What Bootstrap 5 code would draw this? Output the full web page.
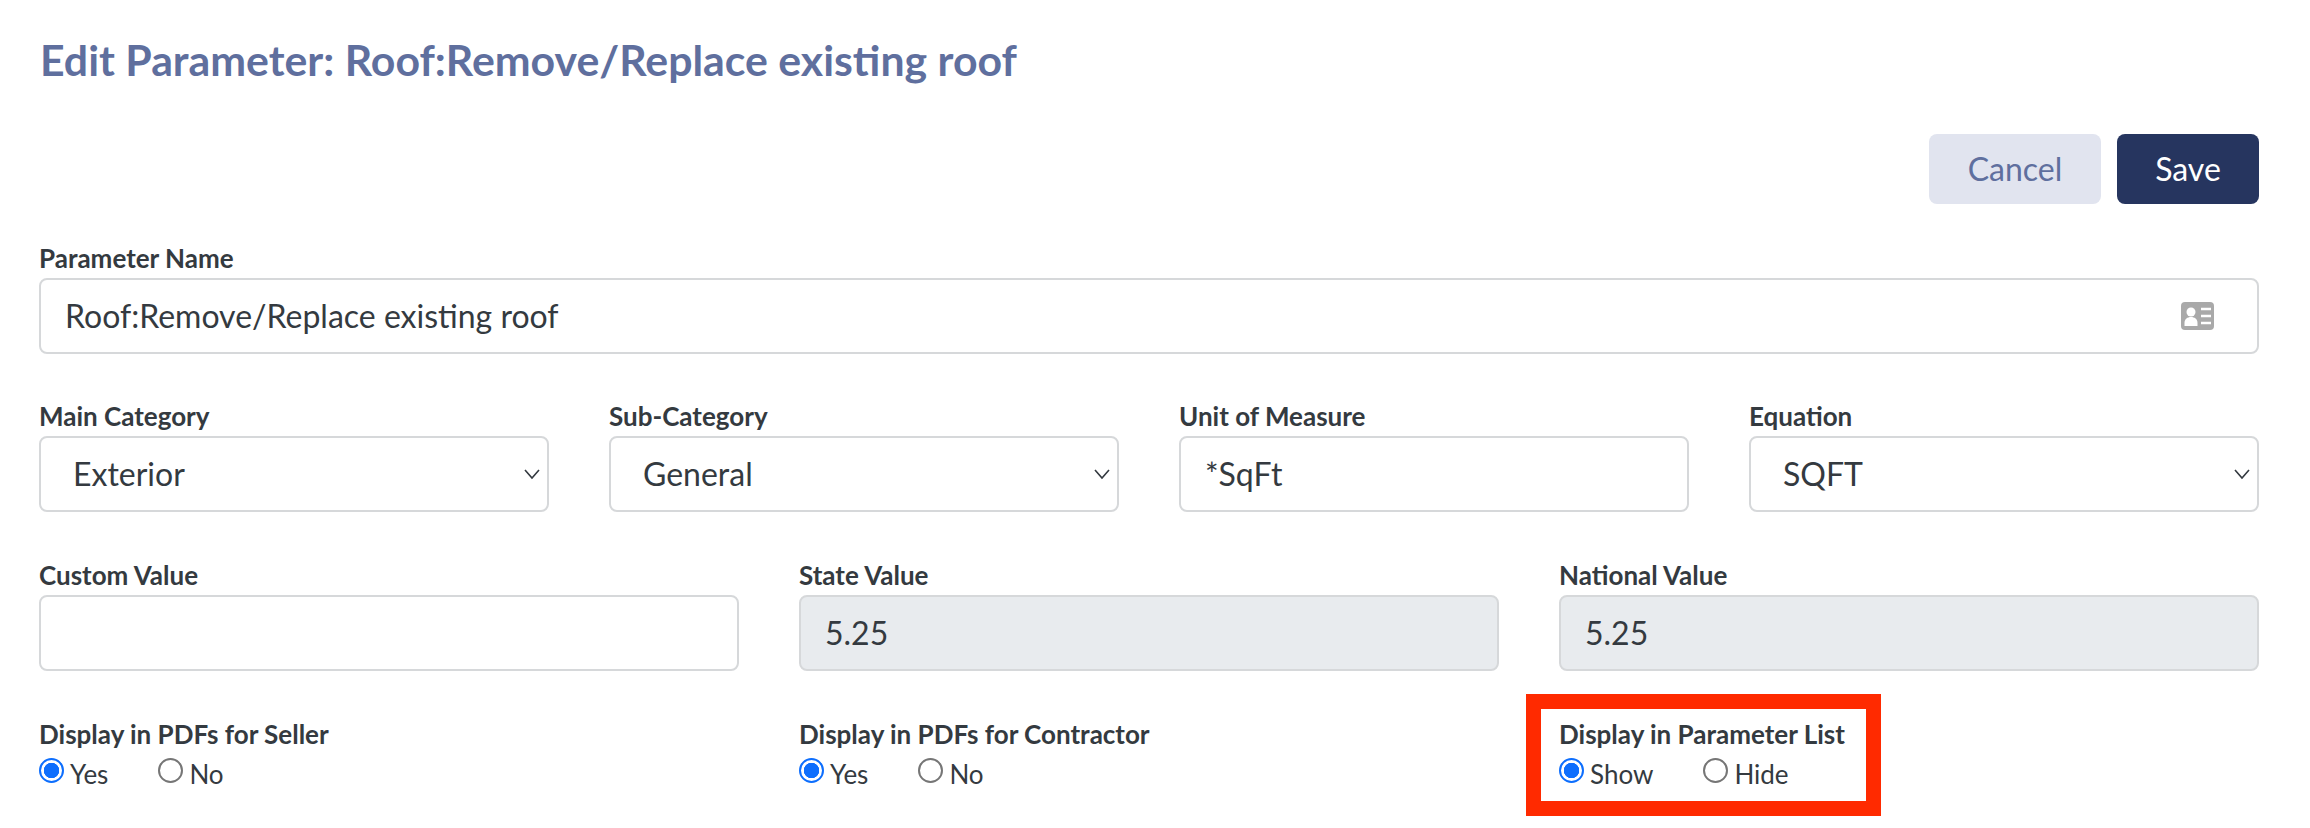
<!DOCTYPE html>
<html lang="en">
<head>
  <meta charset="UTF-8" />
  <title>Edit Parameter</title>
  <link href="https://cdn.jsdelivr.net/npm/bootstrap@5.3.0/dist/css/bootstrap.min.css" rel="stylesheet" />
  <style>
    body {
      font-family: Lato, "Liberation Sans", sans-serif;
      color: #343a40;
      background: #fff;
    }
    .page-wrap {
      padding: 36px 51px 60px 39px;
    }
    .page-title {
      font-size: 42.800px;
      font-weight: 700;
      line-height: 48px;
      color: #5f6f9e;
      margin: 0 0 50px 1px;
    }
    .action-bar {
      margin-bottom: 39px;
    }
    .btn-cancel, .btn-save {
      font-size: 32px;
      height: 70px;
      line-height: 1;
      border: 0;
      border-radius: 8px;
    }
    .btn-cancel {
      width: 172px;
      background: #e1e4ef;
      color: #5f6f9e;
    }
    .btn-save {
      width: 142px;
      background: #26355f;
      color: #fff;
    }
    .field-row {
      --bs-gutter-x: 60px;
      --bs-gutter-y: 0;
    }
    .field-label {
      display: block;
      font-size: 26px;
      font-weight: 700;
      line-height: 30px;
      margin-bottom: 5px;
      color: #343a40;
    }
    .field-input {
      height: 76px;
      font-size: 32px;
      color: #343a40;
      padding: 0 24px 2px;
      border: 2px solid #d6d8da;
      border-radius: 8px;
    }
    .field-input:disabled {
      background: #e8ebee;
    }
    select.field-input {
      padding: 0 24px 0 32px;
      background-image: url("data:image/svg+xml,%3csvg xmlns='http://www.w3.org/2000/svg' viewBox='0 0 18 12'%3e%3cpath fill='none' stroke='%23343a40' stroke-width='1.6' d='M2 2l7 8 7-8'/%3e%3c/svg%3e");
      background-size: 18px 12px;
      background-position: right 6px center;
    }
    .name-group {
      margin-bottom: 47px;
    }
    .name-icon {
      right: 45px;
      top: 24px;
      width: 33px;
      height: 28px;
    }
    .spaced-row {
      margin-bottom: 48px;
    }
    .last-row {
      margin-top: 48px;
    }
    .radio-line {
      display: flex;
      gap: 50px;
      margin-top: 7px;
      font-size: 26px;
      line-height: 30px;
    }
    .radio-line .form-check {
      display: flex;
      align-items: flex-start;
      gap: 6px;
      margin: 0;
      padding: 0;
      min-height: 0;
    }
    .radio-line label {
      padding-top: 3px;
    }
    .radio-line .form-check-input {
      float: none;
      width: 25px;
      height: 25px;
      margin: 2px 0 0;
      border: 2px solid #767676;
      background-color: #fff;
    }
    .radio-line .form-check-input:checked {
      border-color: #0d6efd;
      background-image: radial-gradient(circle, #0d6efd 0 7.500px, #fff 8px);
    }
    .callout-col::after {
      content: "";
      position: absolute;
      left: -3px;
      top: -25px;
      width: 355px;
      height: 122px;
      padding: 0;
      border: 15px solid #ff2a00;
      pointer-events: none;
    }
  </style>
</head>
<body>
  <div class="page-wrap">
    <h1 class="page-title">Edit Parameter: Roof:Remove/Replace existing roof</h1>

    <div class="action-bar d-flex justify-content-end">
      <button type="button" class="btn btn-cancel me-3">Cancel</button>
      <button type="button" class="btn btn-save">Save</button>
    </div>

    <div class="name-group">
      <label class="field-label" for="param_name">Parameter Name</label>
      <div class="position-relative">
        <input type="text" class="form-control field-input" id="param_name" value="Roof:Remove/Replace existing roof" />
        <svg class="name-icon position-absolute" viewBox="0 0 33 28">
          <rect width="33" height="28" rx="4" fill="#a9a9a9" />
          <circle cx="10" cy="10" r="4.500" fill="#fff" />
          <path d="M3.500 24v-3c0-4 3-6 6.500-6s6.500 2 6.500 6v3z" fill="#fff" />
          <path d="M20 7h10M20 14h10M20 21h10" stroke="#fff" stroke-width="2.500" />
        </svg>
      </div>
    </div>

    <div class="row field-row spaced-row">
      <div class="col-3">
        <label class="field-label" for="main_cat">Main Category</label>
        <select class="form-select field-input" id="main_cat"><option>Exterior</option></select>
      </div>
      <div class="col-3">
        <label class="field-label" for="sub_cat">Sub-Category</label>
        <select class="form-select field-input" id="sub_cat"><option>General</option></select>
      </div>
      <div class="col-3">
        <label class="field-label" for="unit">Unit of Measure</label>
        <input type="text" class="form-control field-input" id="unit" value="*SqFt" />
      </div>
      <div class="col-3">
        <label class="field-label" for="equation">Equation</label>
        <select class="form-select field-input" id="equation"><option>SQFT</option></select>
      </div>
    </div>

    <div class="row field-row">
      <div class="col-4">
        <label class="field-label" for="custom_val">Custom Value</label>
        <input type="text" class="form-control field-input" id="custom_val" />
      </div>
      <div class="col-4">
        <label class="field-label" for="state_val">State Value</label>
        <input type="text" class="form-control field-input" id="state_val" value="5.25" disabled />
      </div>
      <div class="col-4">
        <label class="field-label" for="national_val">National Value</label>
        <input type="text" class="form-control field-input" id="national_val" value="5.25" disabled />
      </div>
    </div>

    <div class="row field-row last-row">
      <div class="col-4">
        <span class="field-label">Display in PDFs for Seller</span>
        <div class="radio-line">
          <div class="form-check"><input class="form-check-input" type="radio" name="seller" id="seller_yes" checked /><label for="seller_yes">Yes</label></div>
          <div class="form-check"><input class="form-check-input" type="radio" name="seller" id="seller_no" /><label for="seller_no">No</label></div>
        </div>
      </div>
      <div class="col-4">
        <span class="field-label">Display in PDFs for Contractor</span>
        <div class="radio-line">
          <div class="form-check"><input class="form-check-input" type="radio" name="contractor" id="contractor_yes" checked /><label for="contractor_yes">Yes</label></div>
          <div class="form-check"><input class="form-check-input" type="radio" name="contractor" id="contractor_no" /><label for="contractor_no">No</label></div>
        </div>
      </div>
      <div class="col-4 position-relative callout-col">
        <span class="field-label">Display in Parameter List</span>
        <div class="radio-line">
          <div class="form-check"><input class="form-check-input" type="radio" name="plist" id="plist_show" checked /><label for="plist_show">Show</label></div>
          <div class="form-check"><input class="form-check-input" type="radio" name="plist" id="plist_hide" /><label for="plist_hide">Hide</label></div>
        </div>
      </div>
    </div>
  </div>
</body>
</html>
